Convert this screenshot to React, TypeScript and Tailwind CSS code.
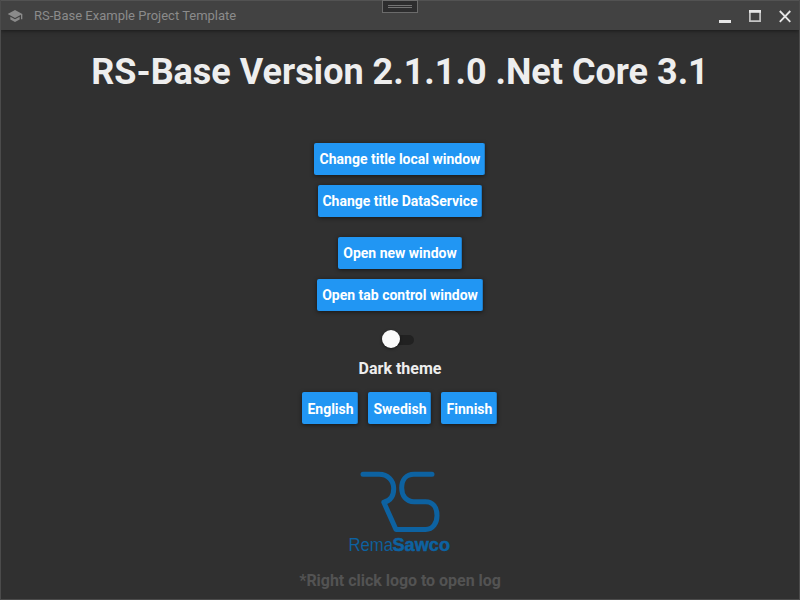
import type { ReactNode } from 'react';

function ActionButton({ children, className }: { children: ReactNode; className: string }) {
  return (
    <button
      type="button"
      className={`flex h-8 items-center justify-center whitespace-nowrap rounded-[2px] border-r border-[#1f7cc6] bg-[#2196f3] text-sm font-bold text-white shadow-[0_1px_4px_rgba(0,0,0,0.55)] ${className}`}
    >
      {children}
    </button>
  );
}

function TitleBar() {
  return (
    <header className="relative flex h-[30px] shrink-0 items-center border-t border-[#525252] bg-[#424242] shadow-[0_1px_4px_rgba(0,0,0,0.5)]">
      <svg className="ml-[6px] h-4 w-4" viewBox="0 0 24 24" fill="#8b8b8b">
        <path d="M12 3 1 9l11 6 9-4.91V17h2V9M5 13.18v4L12 21l7-3.82v-4L12 17l-7-3.82z" />
      </svg>
      <span className="ml-[11px] text-[13px] leading-none text-[#8b8b8b]">RS-Base Example Project Template</span>
      <svg className="ml-auto h-[30px] w-[90px]" viewBox="0 0 90 30" fill="none" stroke="#e6e6e6">
        <path d="M10 20.5h12" strokeWidth="3" />
        <path d="M40.9 10v10.2h10.2V10" stroke="#c4c4c4" strokeWidth="1.7" />
        <path d="M40 10.4h12" strokeWidth="2.8" />
        <path d="m70.8 10 10.5 10.8m0-10.8L70.8 20.8" strokeWidth="1.8" />
      </svg>
      <div className="absolute -top-px left-[381px] flex h-[13px] w-9 flex-col items-center gap-px border border-[#6b6b6b] bg-[#2d2d2e] pt-1">
        <div className="h-px w-6 bg-[#747474]" />
        <div className="h-px w-6 bg-[#747474]" />
      </div>
    </header>
  );
}

function Logo() {
  return (
    <svg className="mt-[40px] h-[96px] w-[110px] shrink-0" viewBox="345 464 110 96">
      <g fill="none" stroke="#0d62a1" strokeWidth="5" strokeLinecap="round" strokeLinejoin="round">
        <path d="M363 474.3H379C388 474.3 393.7 480.5 393.7 488.5C393.7 496.5 389.5 501 383.8 502.3L396 529.5H425.5C433 529.5 437 523 437 515.5C437 507.5 433 501.7 425.5 501.7H414C406 501.7 401.7 495.5 401.7 488C401.7 480 406 474.3 414 474.3H432" />
      </g>
      <g fill="#0d62a1" fontFamily="'Liberation Sans', Arial, sans-serif" fontSize="18">
        <text x="348.5" y="551" stroke="#303030" strokeWidth="0.1" textLength="44.5" lengthAdjust="spacingAndGlyphs">Rema</text>
        <text x="392.5" y="551" fontWeight="700" stroke="#0d62a1" strokeWidth="0.5" textLength="57.5" lengthAdjust="spacingAndGlyphs">Sawco</text>
      </g>
    </svg>
  );
}

export default function App() {
  return (
    <div className="flex h-[600px] w-[800px] flex-col overflow-hidden border-x border-b border-[#4b4b4b] bg-[#303030] font-[Roboto,sans-serif]">
      <TitleBar />
      <main className="flex flex-col items-center">
        <h1 className="mt-[21px] whitespace-nowrap text-[36px] font-bold leading-[42px] text-[#eeeeee]">
          RS-Base Version 2.1.1.0 .Net Core 3.1
        </h1>
        <div className="mt-[50px] flex flex-col items-center gap-[10px]">
          <ActionButton className="mr-px w-[171px] pl-[2px]">Change title local window</ActionButton>
          <ActionButton className="w-[164px] pl-px">Change title DataService</ActionButton>
        </div>
        <div className="mt-5 flex flex-col items-center gap-[10px]">
          <ActionButton className="w-[124px] pl-px">Open new window</ActionButton>
          <ActionButton className="w-[166px] pl-px">Open tab control window</ActionButton>
        </div>
        <button type="button" role="switch" aria-checked="false" aria-label="Dark theme" className="mr-1 mt-[19px] flex h-[18px] w-8 items-center rounded-full">
          <span className="z-10 h-[18px] w-[18px] shrink-0 rounded-full bg-[#fafafa] shadow-[0_1px_3px_rgba(0,0,0,0.5)]" />
          <span className="-ml-1 mt-px h-[10px] w-[18px] rounded-r-full bg-[#212121]" />
        </button>
        <p className="mt-[11px] text-base font-bold leading-5 text-[#eeeeee]">Dark theme</p>
        <div className="mr-[2px] mt-[13px] flex gap-[10px]">
          <ActionButton className="w-[56px] pl-[3px] pt-[2px]">English</ActionButton>
          <ActionButton className="w-[63px] pl-[3px] pt-[2px]">Swedish</ActionButton>
          <ActionButton className="w-[56px] pl-[3px] pt-[2px]">Finnish</ActionButton>
        </div>
        <Logo />
        <p className="mt-[11px] text-base font-bold leading-5 tracking-[-0.03px] text-[#535353]">*Right click logo to open log</p>
      </main>
    </div>
  );
}
